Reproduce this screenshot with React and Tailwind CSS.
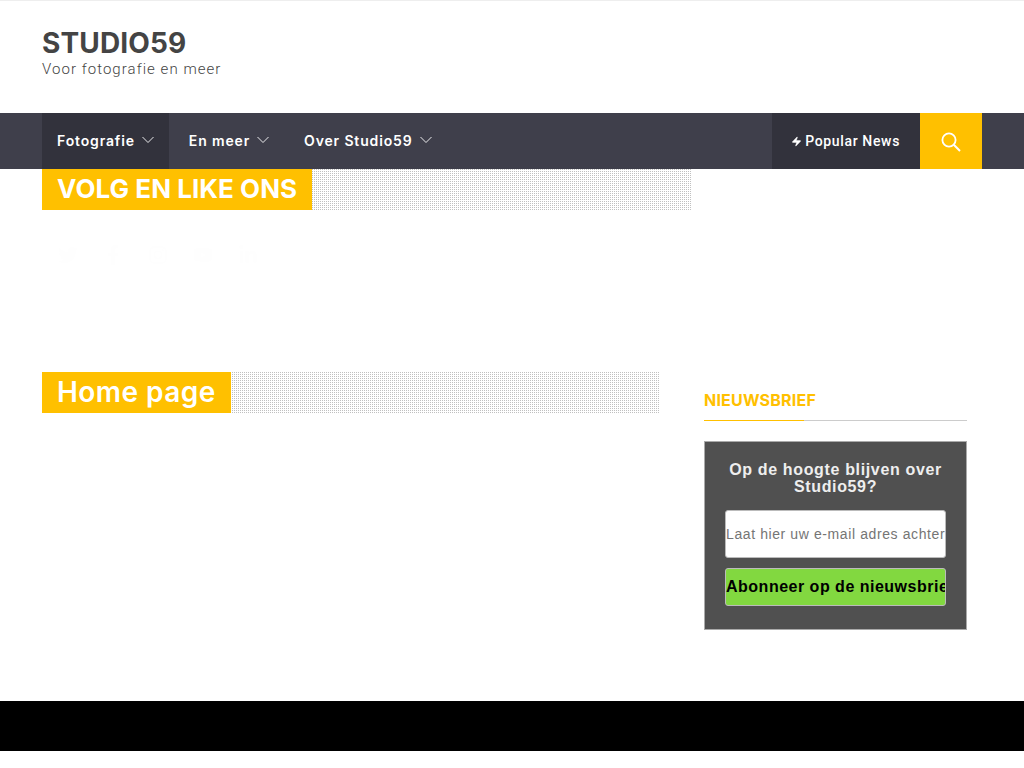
import React from "react";
import { Zap } from "lucide-react";
import { FaTwitter, FaFacebookF, FaInstagram, FaYoutube, FaLinkedinIn } from "react-icons/fa";

const dots = "bg-[linear-gradient(90deg,transparent_1px,#fff_1px),linear-gradient(#c0c0c0_1px,#fff_1px)] bg-[length:2px_2px]";
const head = "font-['Inter','Liberation_Sans',sans-serif]";

function Chevron() {
  return (
    <svg width="12" height="12" viewBox="0 0 12 12" fill="none" stroke="currentColor" strokeWidth="0.9" className="mb-[1px]">
      <polyline points="0.5,3 6,8.5 11.5,3" />
    </svg>
  );
}

function NavItem({ label, active }) {
  return (
    <div className={`flex items-center gap-[7px] px-[15px] pb-[1px] h-full text-white text-[14px] font-semibold tracking-[0.85px] ${head} ${active ? "bg-[#32323c]" : ""}`}>
      {label}
      <Chevron />
    </div>
  );
}

function Title({ children, width, upper }) {
  return (
    <div className={`flex h-[41px] ${dots}`} style={{ width }}>
      <div className={`flex h-full items-center bg-[#ffc000] px-[15px] text-white ${upper ? "pb-[2px] text-[26px] font-bold tracking-[0.05px]" : "pb-[1px] text-[28px] font-semibold tracking-[0.45px]"} ${head}`}>
        {children}
      </div>
    </div>
  );
}

export default function App() {
  return (
    <div className="min-h-[768px] bg-white font-['Liberation_Sans',sans-serif]">
      <header className="h-[113px] border-t border-[#eeeeee] px-[42px] pt-[27px]">
        <div className={`text-[28px] leading-[30px] font-bold text-[#444444] tracking-[0.15px] ${head}`}>STUDIO59</div>
        <div className="mt-[1px] text-[15px] leading-[20px] font-light tracking-[1.05px] text-[#444444] font-['Roboto',sans-serif]">Voor fotografie en meer</div>
      </header>

      <nav className="flex h-[56px] bg-[#3f3f4b] px-[42px]">
        <div className="flex h-full gap-[5px]">
          <NavItem label="Fotografie" active />
          <NavItem label="En meer" />
          <NavItem label="Over Studio59" />
        </div>
        <div className="ml-auto flex h-full items-center gap-[3px] bg-[#32323c] pl-[19px] pr-[20px] text-[14px] font-medium tracking-[0.65px] text-white font-['Roboto',sans-serif]">
          <Zap size={11} fill="currentColor" strokeWidth={1} />
          Popular News
        </div>
        <div className="flex h-full w-[62px] items-center justify-center bg-[#ffc000] text-white">
          <svg width="20" height="20" viewBox="0 0 20 20" fill="none" stroke="currentColor" className="mt-[2px]">
            <circle cx="8" cy="8" r="6.6" strokeWidth="1.8" />
            <line x1="12.8" y1="12.8" x2="19" y2="19" strokeWidth="2" />
          </svg>
        </div>
      </nav>

      <div className="px-[42px]">
        <Title width={649} upper>VOLG EN LIKE ONS</Title>
        <div className="mt-[33px] flex h-[24px] items-center pl-[3px] text-[20px] text-[#fefefe]">
          <div className="flex w-[45px] justify-center"><FaTwitter /></div>
          <div className="flex w-[45px] justify-center"><FaFacebookF /></div>
          <div className="flex w-[45px] justify-center"><FaInstagram /></div>
          <div className="flex w-[45px] justify-center"><FaYoutube /></div>
          <div className="flex w-[45px] justify-center"><FaLinkedinIn /></div>
        </div>
      </div>

      <div className="mt-[105px] flex px-[42px]">
        <main className="w-[617px]">
          <Title width={617}>Home page</Title>
        </main>
        <aside className="ml-[45px] w-[263px]">
          <div className={`mt-[18px] text-[16px] leading-[20px] font-bold tracking-[0.2px] text-[#ffc000] ${head}`}>NIEUWSBRIEF</div>
          <div className="mt-[10px] h-px bg-[#cccccc]">
            <div className="h-px w-[100px] bg-[#ffc000]" />
          </div>
          <div className="mt-[20px] h-[189px] border border-[#aaaaaa] bg-[#505050] px-[20px] pt-[19px]">
            <div className="text-center text-[16px] leading-[17px] font-bold tracking-[0.65px] text-[#eeeeee]">
              Op de hoogte blijven over Studio59?
            </div>
            <div className="mt-[15px] flex h-[48px] items-center overflow-hidden rounded-[3px] border border-[#bbbbbb] bg-white whitespace-nowrap text-[14px] tracking-[0.6px] text-[#757575]">
              Laat hier uw e-mail adres achter
            </div>
            <div className="mt-[10px] flex h-[38px] items-center overflow-hidden rounded-[3px] border border-[#bbbbbb] bg-[#82d840] whitespace-nowrap text-[16px] font-bold tracking-[0.5px] text-black">
              Abonneer op de nieuwsbrief
            </div>
          </div>
        </aside>
      </div>

      <footer className="mt-[71px] h-[50px] bg-black" />
    </div>
  );
}
